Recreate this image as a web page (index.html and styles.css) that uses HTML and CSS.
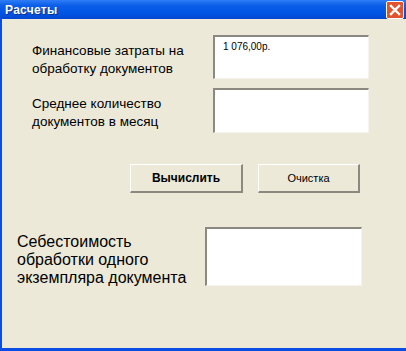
FILE: index.html
```html
<!DOCTYPE html>
<html lang="ru">
<head>
	<meta charset="UTF-8">
	<title>Расчеты</title>
	<link rel="stylesheet" href="styles.css">
</head>
<body>
	<section class="window">
		<header class="titlebar">
			<span class="title">Расчеты</span>
			<a href="javascript:;" class="close">
				<svg width="12" height="12" viewBox="0 0 12 12"><path d="M2 2L10 10M10 2L2 10" stroke="#fff" stroke-width="2.4" stroke-linecap="square"/></svg>
			</a>
		</header>
		<div class="content">
			<div class="fields">
				<label class="label">Финансовые затраты на<br>обработку документов</label>
				<div class="input first">1 076,00р.</div>
				<label class="label">Среднее количество<br>документов в месяц</label>
				<div class="input second"></div>
			</div>
			<div class="buttons">
				<a href="javascript:;" class="btn calc">Вычислить</a>
				<a href="javascript:;" class="btn clear">Очистка</a>
			</div>
			<div class="result">
				<label class="label big">Себестоимость<br>обработки одного<br>экземпляра документа</label>
				<div class="input third"></div>
			</div>
		</div>
	</section>
</body>
</html>
```

FILE: styles.css
```css
body{
	margin: 0;
	font-family: "Liberation Sans", Arial, sans-serif;
	color: #000;
}
html{
	overflow: hidden;
}
.window{
	width: 406px;
	height: 351px;
	box-sizing: border-box;
	display: flex;
	flex-direction: column;
	background: #ece9d8;
	border-left: 2px solid #0a4de4;
	border-bottom: 3px solid #0a4de4;
}
.titlebar{
	height: 19px;
	margin-left: -2px;
	display: flex;
	align-items: center;
	justify-content: space-between;
	padding: 0 2px 0 5px;
	background: linear-gradient(#2f7cf6 0%, #0a5ee8 30%, #0054e3 70%, #0048d0 100%);
}
.title{
	color: #fff;
	font-weight: bold;
	font-size: 12px;
	letter-spacing: 0.3px;
	text-shadow: 1px 1px 0 #0a2f8a;
}
.close{
	width: 18px;
	height: 18px;
	box-sizing: border-box;
	display: flex;
	align-items: center;
	justify-content: center;
	background: #e2522c;
	border: 1px solid #fff;
	border-radius: 2px;
	margin-top: 1px;
}
.content{
	flex: 1;
	display: flex;
	flex-direction: column;
	padding-top: 16px;
}
.fields{
	display: grid;
	grid-template-columns: 181px 156px;
	row-gap: 9px;
	padding-left: 30px;
	align-items: center;
}
.label{
	font-size: 13.5px;
	line-height: 18px;
	padding-top: 5px;
}
.label.big{
	font-size: 16px;
	padding-top: 8px;
}
.input{
	background: #fff;
	box-sizing: border-box;
	border-top: 2px solid #8c8a80;
	border-left: 2px solid #8c8a80;
	border-right: 1px solid #f4f3ee;
	border-bottom: 1px solid #f4f3ee;
	font-size: 10px;
	padding: 4px 0 0 8px;
}
.first{
	height: 44px;
}
.second{
	height: 45px;
}
.buttons{
	display: flex;
	gap: 15px;
	padding: 31px 0 0 128px;
}
.btn{
	height: 29px;
	box-sizing: border-box;
	display: flex;
	align-items: center;
	justify-content: center;
	text-decoration: none;
	color: #000;
	background: #ece9d8;
	border-top: 1px solid #fff;
	border-left: 1px solid #fff;
	border-right: 2px solid #8c8a80;
	border-bottom: 2px solid #8c8a80;
}
.calc{
	width: 113px;
	font-size: 12px;
	font-weight: bold;
}
.clear{
	width: 102px;
	font-size: 11px;
}
.result{
	display: grid;
	grid-template-columns: 188px 157px;
	padding: 32px 0 0 15px;
	align-items: center;
}
.third{
	height: 59px;
}
```
